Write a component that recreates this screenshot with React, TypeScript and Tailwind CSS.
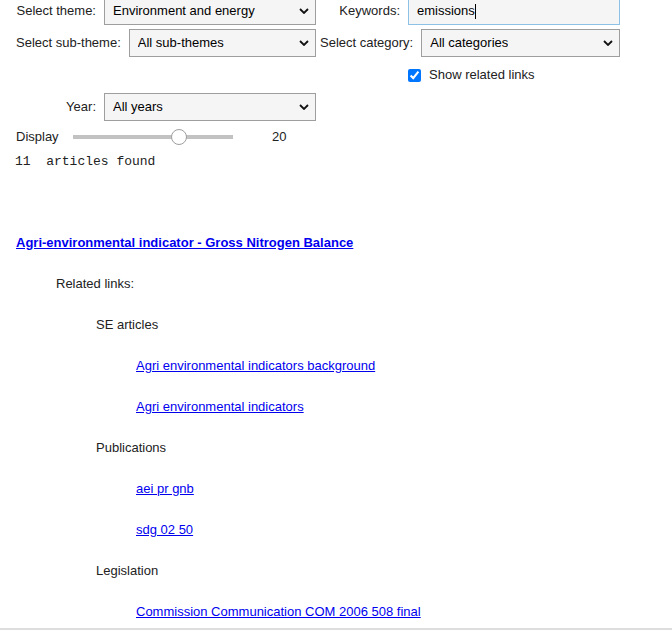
import React from 'react';

function Chevron() {
    return (
        <svg width="10" height="6" viewBox="0 0 10 6" className="shrink-0">
            <path d="M1 1 L5 5 L9 1" fill="none" stroke="#111" strokeWidth="1.8" />
        </svg>
    );
}

function FakeSelect({ value }: { value: string }) {
    return (
        <div className="flex h-[28px] min-w-0 flex-1 items-center justify-between border border-[#9e9e9e] bg-[#f5f5f5] pl-2 pr-[6px] text-black">
            <span className="truncate">{value}</span>
            <Chevron />
        </div>
    );
}

const links = [
    { level: 1, text: 'Related links:' },
    { level: 2, text: 'SE articles' },
    { level: 3, text: 'Agri environmental indicators background' },
    { level: 3, text: 'Agri environmental indicators' },
    { level: 2, text: 'Publications' },
    { level: 3, text: 'aei pr gnb' },
    { level: 3, text: 'sdg 02 50' },
    { level: 2, text: 'Legislation' },
    { level: 3, text: 'Commission Communication COM 2006 508 final' },
];

export default function App() {
    return (
        <div className="relative flex h-[630px] w-[672px] flex-col overflow-hidden bg-white font-['Liberation_Sans',Arial,sans-serif] text-[13px] text-[#222]">
            <div className="mt-[-3px] flex flex-col gap-[4px]">
                {/* theme + keywords */}
                <div className="flex h-[28px] items-center pl-2">
                    <div className="flex w-[308px] items-center">
                        <label className="min-w-[96px] px-2 text-right">Select theme:</label>
                        <FakeSelect value="Environment and energy" />
                    </div>
                    <div className="ml-[-4px] flex w-[308px] items-center">
                        <label className="min-w-[96px] px-2 text-right">Keywords:</label>
                        <div className="flex h-[28px] flex-1 items-center border border-[#8ec1e6] bg-[#f5f5f5] pl-2 text-black">
                            <span>emissions</span>
                            <span className="h-[15px] w-px bg-black" />
                        </div>
                    </div>
                </div>

                {/* sub-theme + category */}
                <div className="flex h-[28px] items-center pl-2">
                    <div className="flex w-[308px] items-center">
                        <label className="min-w-[96px] whitespace-nowrap px-2 text-right">Select sub-theme:</label>
                        <FakeSelect value="All sub-themes" />
                    </div>
                    <div className="ml-[-4px] flex w-[308px] items-center">
                        <label className="min-w-[96px] whitespace-nowrap px-2 text-right">Select category:</label>
                        <FakeSelect value="All categories" />
                    </div>
                </div>

                {/* related links toggle */}
                <div className="flex h-[28px] items-center pl-[408px]">
                    <input type="checkbox" defaultChecked className="m-0 h-[13px] w-[13px] accent-[#0075ff]" />
                    <span className="ml-[8px]">Show related links</span>
                </div>

                {/* year */}
                <div className="flex h-[28px] items-center pl-2">
                    <div className="flex w-[308px] items-center">
                        <label className="min-w-[96px] px-2 text-right">Year:</label>
                        <FakeSelect value="All years" />
                    </div>
                </div>

                {/* display slider */}
                <div className="mt-[1px] flex h-[22px] items-center pl-4">
                    <span className="w-[57px]">Display</span>
                    <div className="relative flex h-[16px] w-[160px] items-center">
                        <div className="h-[4px] w-full bg-[#c2c2c2]" />
                        <div className="absolute left-[98px] top-0 h-[16px] w-[16px] rounded-full border border-[#9e9e9e] bg-white" />
                    </div>
                    <span className="ml-[39px]">20</span>
                </div>
            </div>

            <div className="mt-[5px] flex h-[18px] items-center whitespace-pre pl-[15px] font-['Liberation_Mono',monospace] text-[13px] text-[#222]">
                11  articles found
            </div>

            <div className="mt-[51px] flex flex-col">
                <div className="flex h-[41px] items-center pl-4">
                    <a href="#" className="font-bold text-[#0000ee] underline">
                        Agri-environmental indicator - Gross Nitrogen Balance
                    </a>
                </div>
                {links.map((l) => (
                    <div
                        key={l.text}
                        className={`flex h-[41px] shrink-0 items-center ${l.level === 1 ? 'pl-[56px]' : l.level === 2 ? 'pl-[96px]' : 'pl-[136px]'}`}
                    >
                        {l.level === 3 ? (
                            <a href="#" className="text-[#0000ee] underline">{l.text}</a>
                        ) : (
                            <span>{l.text}</span>
                        )}
                    </div>
                ))}
            </div>

            <div className="absolute bottom-0 left-0 h-[2px] w-full bg-[#dddddd]" />
        </div>
    );
}
